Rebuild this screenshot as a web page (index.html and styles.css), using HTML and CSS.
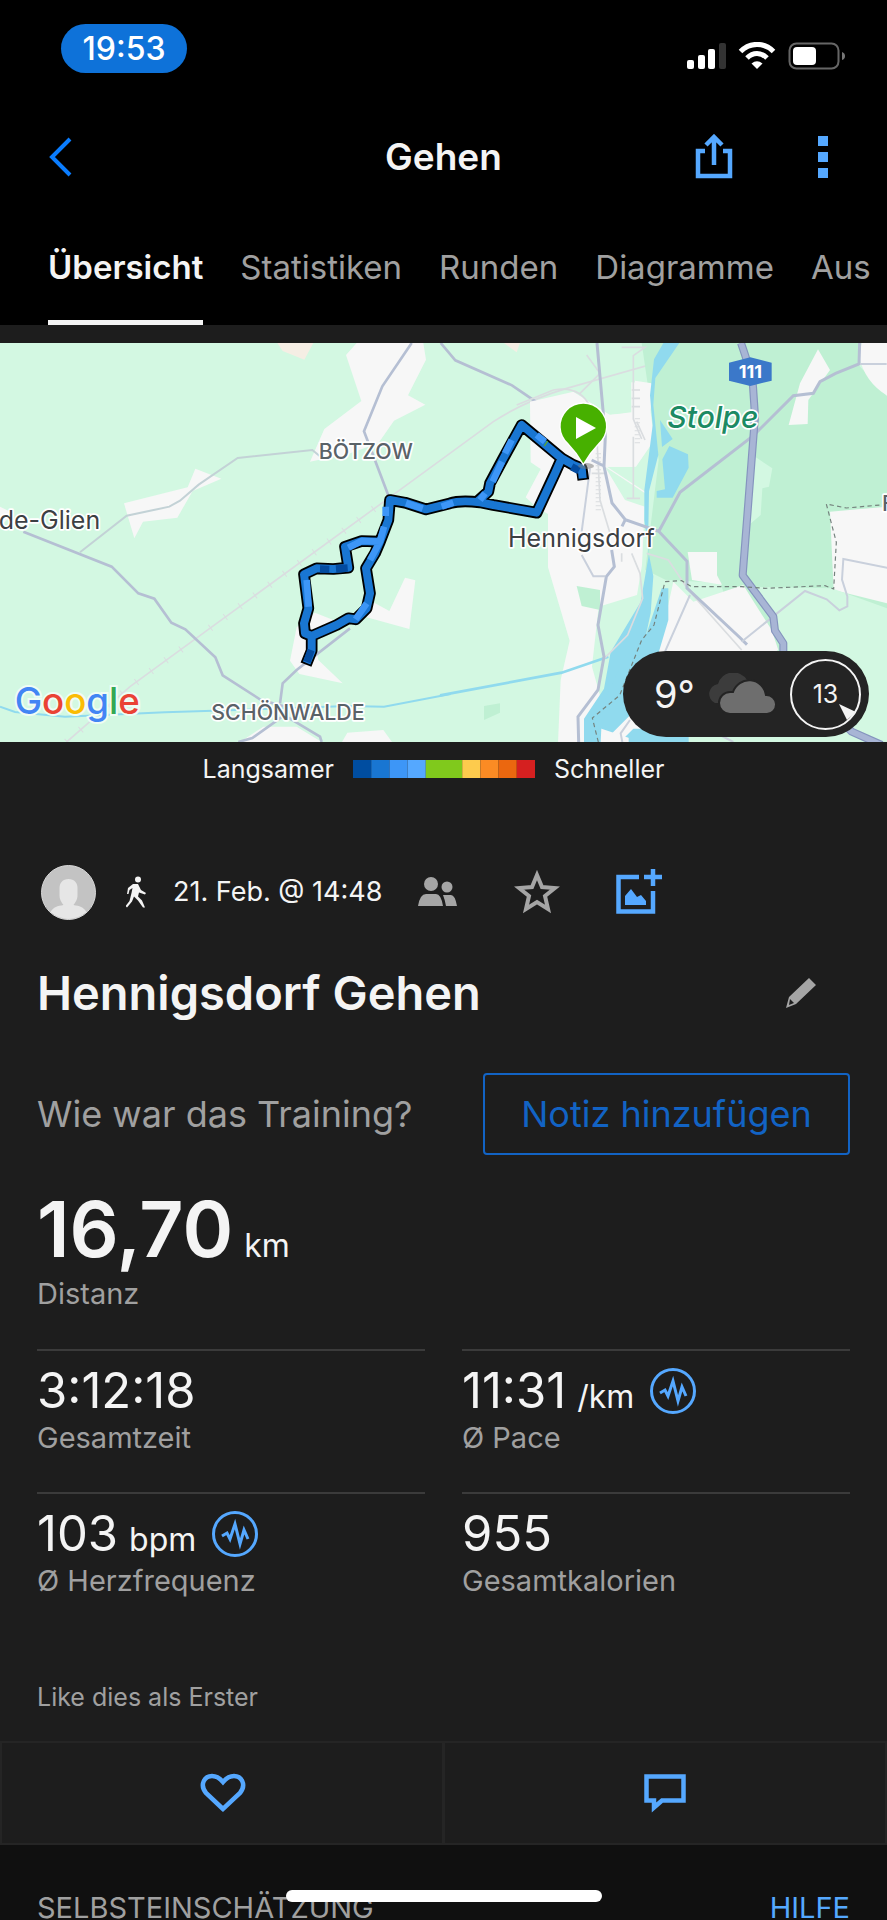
FILE: index.html
```html
<!DOCTYPE html>
<html lang="de">
  <head>
    <meta charset="UTF-8">
    <meta name="viewport" content="width=device-width, initial-scale=1">
    <title>Gehen</title>
    <link rel="stylesheet" href="styles.css">
  </head>
  <body>
    <header>
      <div class="status">
        <span class="clock">19:53</span>
        <svg class="indicators" width="160" height="28" viewBox="0 0 160 28">
          <g fill="#fff">
            <rect x="0" y="18" width="7" height="9" rx="2"/>
            <rect x="11" y="13" width="7" height="14" rx="2"/>
            <rect x="21" y="7" width="7" height="20" rx="2"/>
            <rect x="32" y="1" width="7" height="26" rx="2" fill="#333"/>
          </g>
          <g fill="none" stroke="#fff" stroke-width="5">
            <path d="M53.500 9.500C63 0 77 0 86.500 9.500"/>
            <path d="M60 16C66 10 74 10 80 16"/>
          </g>
          <path d="M64.500 21.500Q70 17 75.500 21.500L70 27z" fill="#fff"/>
          <rect x="102.500" y="1.500" width="49" height="25" rx="7" fill="none" stroke="#666" stroke-width="2"/>
          <rect x="106" y="5" width="23" height="18" rx="4" fill="#fff"/>
          <path d="M155 10q3 1 3 4t-3 4z" fill="#777"/>
        </svg>
      </div>
      <div class="nav">
        <button class="back" aria-label="Zurück">
          <svg width="26" height="42" viewBox="0 0 26 42"><path d="M23 3L5 21l18 18" fill="none" stroke="#0a7dff" stroke-width="4"/></svg>
        </button>
        <h1>Gehen</h1>
        <div class="actions">
          <button aria-label="Teilen">
            <svg width="38" height="46" viewBox="0 0 38 46"><path d="M10 17H3v25h32V17h-7M19 31V3M11 11l8-8 8 8" fill="none" stroke="#55a8ff" stroke-width="4.500"/></svg>
          </button>
          <button aria-label="Mehr">
            <svg width="10" height="42" viewBox="0 0 10 42" fill="#55a8ff"><path d="M0 0h10v10H0zM0 16h10v10H0zM0 32h10v10H0z"/></svg>
          </button>
        </div>
      </div>
      <nav class="tabs">
        <a class="active" href="#uebersicht">Übersicht</a>
        <a href="#statistiken">Statistiken</a>
        <a href="#runden">Runden</a>
        <a href="#diagramme">Diagramme</a>
        <a href="#aus">Aus</a>
      </nav>
    </header>

    <main id="uebersicht">
      <div class="map">
        <svg class="tiles" viewBox="0 9 2661 1197" preserveAspectRatio="xMidYMid slice">
          <rect width="2661" height="1206" fill="#d3f8e2"/>

          <!-- western half -->
          <g fill="#f7f7f7">
            <path d="M1070 9h200l8 50-54 107 52 28-94 48-47 68-85 30-120 25 43-98 111-84-46-138z"/>
            <path d="M372 490l191-48 23-56 78 30-86 37-46 80-103 12-26 50z"/>
            <path d="M1215 713l31 8-18 146-128-35 20-45 48 26zM945 818l55 22-60 40 15 80 73 70-130-28-28-40 20-100z"/>
            <path d="M1042 1178l108-8 26 36h-150zM790 1160h100l75 46H720zM0 500l40 20-40 40z"/>
          </g>
          <path d="M832 9h108l-27 50-65-26zM1512 9h48l-10 28z" fill="#f5eee4"/>
          <g fill="none" stroke="#dadde0" stroke-width="5">
            <path d="M200 1206L390 1040 650 850 1165 475 1480 245Q1580 180 1700 145L2180 9"/>
            <path d="M200 1206L390 1040 650 850 1165 475" stroke-dasharray="3 52" stroke-width="22"/>
          </g>
          <g fill="none" stroke="#b5bfd3" stroke-width="8">
            <path d="M70 575l265 105 80 80 48 16 51 72 42 20 90 84 22 54 115 74 75 20M1235 9l-88 130-55 135 74 195M1050 865l-160 125-42 40-8 60M860 1130l100 60 5 16M715 1206l42-12 90-64"/>
            <path d="M240 637l140-110 128-27 32-18 56-48 117-80 224-24 30 25" stroke="#c3d2d6" stroke-width="6"/>
            <path d="M1322 9l44 52 170 75 70 48 85 100"/>
          </g>
          <path d="M0 1100l45 16 150 14 300-13 240-8 310-11 107 2 200-38" fill="none" stroke="#90daee" stroke-width="6"/>

          <!-- eastern half -->
          <g transform="translate(1320 0)">
            <path d="M605 9h655l-5 65 86 95v1040l-340-20-160-460-165-10-60-30 40-330z" fill="#bff0d3"/>
            <g fill="#f7f7f7">
              <path d="M270 185l130-30 110 70 64-8v-90l62 5-10 160-45 88h-80l115 75-10 220-15 90-115 35-20 180 50 180 0 50H354l8-190 27-118-65-220v-160l-35-20-32-30 45-85-30-20z"/>
              <path d="M585 122l50 8-4 80 12 90-55 80h-88V225l75-5z"/>
              <path d="M1134 28l36 62-65 90-2 72-57 3 34-125zM1265 9h80v160q-70-40-88-120zM743 636h88v70l15 28-90-14z"/>
              <path d="M700 725l60 60 150-50 15 25 70 110 20 60-200 120-180 156h-180l70-110 120-120zM1170 515l171-15v290l-160-40z"/>
            </g>
            <path d="M925 740l250 5 166 60v400H1035V900l-45-75zM930 340l67 45-10 55-20 5-5 80-35 30z" fill="#d3f8e2"/>
            <path d="M410 738l70 12v60l-55-12zM132 1098l48-8v28l-48 22z" fill="#bff0d3"/>
            <path d="M495 380l120 80v40l-60-20zM496 820l94-30-60 115-50 30z" fill="#d3f8e2"/>
            <g fill="#90daee">
              <path d="M718 9l-72 105-6 80 15 150-28 110-3 175 16 80-8 110-30 140-80 80-35 65-5 102H432v-70l60-90 20-110 90-150 25-145-14-100v-90l25-195-8-90 12-108 60-104z"/>
              <path d="M665 745h20v95l-40 135-60 20-15 200-90-30-30 40 30-95 80-170 60-60zM660 240l38 57-32 24zM688 318l56 25 2 40-48 90h-48v-20l25-5-8-90z"/>
            </g>
            <path d="M0 1066l365-68 140-48" fill="none" stroke="#90daee" stroke-width="8"/>
            <path d="M566 1206v-40h180v40z" fill="#90daee"/>
            <path d="M490 1206l90-90v50l-40 40z" fill="#f7f7f7"/>
            <g fill="none" stroke="#dadde0" stroke-width="5">
              <path d="M230 195l110-45q80-15 110 50l20 80 10 200 30 100M440 45l40 55-60 60M545 22h70l-35 25v190l25 60M580 290v185M575 640l25 60 8 75-45 110-70 70M620 640l65 20 60 90 160 180"/>
              <path d="M575 150h25M575 175h25M575 200h25M560 475h40M455 400h45M545 640v25M590 245l25 55" stroke-width="5"/>
              <path d="M475 340v180M592 235v80" stroke-width="16" stroke-dasharray="3 9"/>
            </g>
            <g fill="none" stroke="#b5bfd3" stroke-width="9">
              <path d="M471 9l17 190 8 90-4 90 24 110 40 50 100 35 85 90v80l160 150 20 20M455 360l37 18M556 539l-10 20M515 630l8 50-24 30-25 145 18 95-18 100-60 80 2 76M655 577l65-120 220-170 120-120 60-7 20-35 47-25 70-28 2-63"/>
              <path d="M450 385l-25 190M425 645l35 64h36M750 765l-75 170M905 905l190-152 65 25 38 33 24-12v-30l-16-50 4-62 140 28M1260 72h80M570 1140l-28 40 5 26M840 1185l40 21" stroke="#c9d0dc" stroke-width="6"/>
            </g>
            <g fill="none" stroke-linejoin="round">
              <path d="M903 9q30 85 36 130l6 90-37 477 92 124 5 42 25 38v60l205 205 90 40" stroke="#8594be" stroke-width="24"/>
              <path d="M903 9q30 85 36 130l6 90-37 477 92 124 5 42 25 38v60l205 205 90 40" stroke="#a8b5d5" stroke-width="17"/>
            </g>
            <path d="M475 1206l-18-72 82-68 66-166 37-45 33-130 50-3 30 18h150l70 5 180-8 26 10 8-140-30-115 60 12 112-10" fill="none" stroke="#74827d" stroke-width="3.500" stroke-dasharray="13 10"/>
          </g>

          <!-- track -->
          <g fill="none" stroke-linejoin="round">
            <path d="M918 974l17-42v-44l-20-8-3-30 13-45-7-55-6-47 38-18 50 2 45-4-10-63 50-17 55 2M935 888l75-33 35-20 22 3 33-33 10-45-12-75 27-45 15-35 25-65 5-60 45 8 63 20 72-18Q1380 480 1440 487l40 8 130 23 55-118 20-45-120-100-55 100-40 75-5 25-30 27M1685 355l35 20 25 10 5 35" stroke="#000" stroke-width="35"/>
            <path d="M920 969l15-37v-44l-20-8-3-30 13-45-7-55-6-47 38-18 50 2 45-4-10-63 50-17 55 2M935 888l75-33 35-20 22 3 33-33 10-45-12-75 27-45 15-35 25-65 5-60 45 8 63 20 72-18Q1380 480 1440 487l40 8 130 23 55-118 20-45-120-100-55 100-40 75-5 25-30 27M1685 355l35 20 25 10 3 30" stroke="#1976d2" stroke-width="24"/>
            <path d="M1045 623l40-20 55 2 12-45M1140 605l-30 55M1100 790l-33 48M920 720l6 80M1157 500v28M1218 489l50 17M1325 500l35-12M1478 425l28-60M1515 340l20-40M1610 285l25 20M1440 480l15-20" stroke="#3d96f7" stroke-width="20"/>
            <path d="M960 687l28 1M1008 687l35-3M933 930l-12 36M1715 380l22 12" stroke="#034b9f" stroke-width="22"/>
            <path d="M1633 318l10-15" stroke="#62aa22" stroke-width="4"/>
          </g>

          <!-- start marker -->
          <ellipse cx="1758" cy="378" rx="24" ry="9" fill="#777" opacity=".5"/>
          <path d="M1750 370Q1732 338 1705 310a68 68 0 1 1 90 0Q1768 338 1750 370z" fill="#47b000" stroke="#fff" stroke-width="8" paint-order="stroke"/>
          <path d="M1728 231v66l60-33z" fill="#fff"/>

          <!-- place names -->
          <g class="places">
            <text x="956" y="356" class="district">BÖTZOW</text>
            <text x="634" y="1140" class="district">SCHÖNWALDE</text>
            <text x="-4" y="567" class="town">de-Glien</text>
            <text x="1524" y="622" class="town">Hennigsdorf</text>
            <text x="2646" y="514" class="district">F</text>
            <text x="2002" y="264" class="forest">Stolpe</text>
          </g>
          <path d="M2187 68l64-16 64 16v54l-64 16-64-16z" fill="#3b78c9"/>
          <text x="2251" y="115" class="road">111</text>
          <text x="44" y="1122" class="brand"><tspan fill="#4285f4">G</tspan><tspan fill="#ea4335">o</tspan><tspan fill="#fbbc04">o</tspan><tspan fill="#4285f4">g</tspan><tspan fill="#34a853">l</tspan><tspan fill="#ea4335">e</tspan></text>
        </svg>

        <div class="weather">
          <span class="temp">9°</span>
          <svg width="72" height="42" viewBox="0 0 72 42">
            <path d="M10 30a10 10 0 0 1 3-19 16 16 0 0 1 29-4v23z" fill="#3c3c3c"/>
            <path d="M25 41a11 11 0 0 1 0-22h3a17 17 0 0 1 33 3 9.500 9.500 0 0 1 1 19z" fill="#6e6e6e" stroke="#242424" stroke-width="2"/>
          </svg>
          <div class="wind">
            <span>13</span>
            <svg width="18" height="18" viewBox="0 0 18 18"><path d="M0 0l17 8-9 8z" fill="#f4f4f4"/></svg>
          </div>
        </div>
      </div>

      <div class="legend">
        <span>Langsamer</span>
        <svg width="182" height="18" viewBox="0 0 10 1" preserveAspectRatio="none">
          <path d="M0 0h1v1H0z" fill="#004da0"/><path d="M1 0h1v1H1z" fill="#1976d2"/>
          <path d="M2 0h1v1H2z" fill="#3d96f7"/><path d="M3 0h1v1H3z" fill="#55a8ff"/>
          <path d="M4 0h2v1H4z" fill="#80c91c"/><path d="M6 0h1v1H6z" fill="#fdcb4d"/>
          <path d="M7 0h1v1H7z" fill="#fb8b24"/><path d="M8 0h1v1H8z" fill="#eb670f"/>
          <path d="M9 0h1v1H9z" fill="#d52020"/>
        </svg>
        <span>Schneller</span>
      </div>

      <div class="meta">
        <svg class="avatar" width="55" height="55" viewBox="0 0 55 55">
          <circle cx="27.500" cy="27.500" r="27" fill="#c3c3c3" stroke="#d8d8d8"/>
          <path d="M27.500 14c6 0 9 4 9 9v7c0 5-2 7-4 10 6 1 10 2 13 7a27 27 0 0 1-36 0c3-5 7-6 13-7-2-3-4-5-4-10v-7c0-5 3-9 9-9z" fill="#e6e6e6"/>
        </svg>
        <svg class="walker" width="22" height="32" viewBox="0 0 22 32">
          <circle cx="12" cy="3.500" r="3" fill="#f4f4f4"/>
          <path d="M7 8l5 0 3 6 5 3-1 1.500-6-2-1 4 4 4 3 7-2 0-5-7-4-4-2 5-5 6-1.500-1.500 4-5 2-8 1-5-3 2-1 4-1.500 0 1-6z" fill="#f4f4f4"/>
        </svg>
        <time>21. Feb. @ 14:48</time>
        <svg class="people" width="40" height="30" viewBox="0 0 40 30" fill="#a5a5a5">
          <circle cx="13" cy="7" r="7"/><circle cx="29" cy="10" r="5.500"/>
          <path d="M0 29q2-12 8-12h10q5 0 7 12zM25 18h8q4 0 6 11H28q-1-6-3-11z"/>
        </svg>
        <button class="star" aria-label="Favorit">
          <svg width="46" height="44" viewBox="0 0 46 44"><path d="M23 5l5 12 13 1-10 8 3 13-11-7-11 7 3-13-10-8 13-1z" fill="none" stroke="#a5a5a5" stroke-width="4"/></svg>
        </button>
        <button aria-label="Foto hinzufügen">
          <svg width="46" height="46" viewBox="0 0 46 46">
            <path d="M23 8H2.500v34.500H37V22M28 8h18M37-1v18" fill="none" stroke="#55a8ff" stroke-width="4.500"/>
            <path d="M9 36v-9l6-7 6 8 4-2 5 6v4z" fill="#55a8ff"/>
          </svg>
        </button>
      </div>

      <div class="title">
        <h2>Hennigsdorf Gehen</h2>
        <button aria-label="Namen bearbeiten">
          <svg width="32" height="32" viewBox="0 0 32 32" fill="#a5a5a5"><path fill-rule="evenodd" d="M24 1l7 7-20 19-10 4 3-11zM5 22l-1 6 5-2z"/></svg>
        </button>
      </div>

      <div class="note">
        <span>Wie war das Training?</span>
        <button>Notiz hinzufügen</button>
      </div>

      <dl class="stats">
        <div class="total">
          <dd>16,70 <small>km</small></dd>
          <dt>Distanz</dt>
        </div>
        <div>
          <dd>3:12:18</dd>
          <dt>Gesamtzeit</dt>
        </div>
        <div>
          <dd>11:31 <small>/km</small>
            <svg width="46" height="46" viewBox="0 0 46 46" fill="none" stroke="#55a8ff" stroke-width="3"><circle cx="23" cy="23" r="21.500"/><path d="M10 25l5-3 3 6 5-15 5 20 4-14 4 9"/></svg>
          </dd>
          <dt>Ø Pace</dt>
        </div>
        <div>
          <dd>103 <small>bpm</small>
            <svg width="46" height="46" viewBox="0 0 46 46" fill="none" stroke="#55a8ff" stroke-width="3"><circle cx="23" cy="23" r="21.500"/><path d="M10 25l5-3 3 6 5-15 5 20 4-14 4 9"/></svg>
          </dd>
          <dt>Ø Herzfrequenz</dt>
        </div>
        <div>
          <dd>955</dd>
          <dt>Gesamtkalorien</dt>
        </div>
      </dl>

      <p class="likes">Like dies als Erster</p>

      <div class="social">
        <button aria-label="Gefällt mir">
          <svg width="46" height="40" viewBox="0 0 46 40"><path d="M23 36L6 20C-1 11 5 3 12 3q6 0 11 6 5-6 11-6c7 0 13 8 6 17z" fill="none" stroke="#55a8ff" stroke-width="4.500"/></svg>
        </button>
        <button aria-label="Kommentieren">
          <svg width="42" height="40" viewBox="0 0 42 40"><path d="M2.500 3.500h37v24H18l-8 7v-7H2.500z" fill="none" stroke="#55a8ff" stroke-width="4.500"/></svg>
        </button>
      </div>
    </main>

    <footer>
      <span>SELBSTEINSCHÄTZUNG</span>
      <a href="#hilfe">HILFE</a>
    </footer>
    <div class="home"></div>
  </body>
</html>
```
FILE: styles.css
```css
html { height: 100%; background-color: #101010; }
body { margin: 0; height: 100%; overflow: hidden; position: relative; color: #f4f4f4; background-color: #101010;
       font-family: Inter, "Liberation Sans", sans-serif; font-size: 29px; line-height: 36px; }
* { box-sizing: border-box; }
svg { display: block; flex: none; }
button { padding: 0; border: 0; background: none; color: inherit; font: inherit; display: flex; align-items: center; justify-content: center; }
a { color: inherit; text-decoration: none; }

header { background-color: #000; }

.status { display: flex; justify-content: space-between; align-items: flex-start; padding: 24px 40px 0 61px; }
.clock { width: 126px; height: 49px; border-radius: 25px; background-color: #0e72d9; color: #fff;
         font-size: 32px; font-weight: 500; line-height: 49px; text-align: center; }
.indicators { margin-top: 18px; }

.nav { display: grid; grid-template-columns: 1fr auto 1fr; align-items: center; height: 70px; margin-top: 49px; padding: 0 59px 0 59px; }
.nav h1 { margin: 0; font-size: 37px; font-weight: 600; line-height: 48px; }
.back { justify-self: start; margin-left: -12px; }
.actions { display: flex; justify-content: flex-end; gap: 85px; align-items: center; }

.tabs { display: flex; gap: 37px; margin-top: 27px; padding-left: 48px; height: 106px; overflow: hidden; white-space: nowrap;
        font-size: 33px; line-height: 96px; color: #a0a0a0; }
.tabs .active { color: #f4f4f4; font-weight: 600; border-bottom: 5px solid #f4f4f4; }

main { background-color: #1d1d1d; padding-top: 18px; }

.map { position: relative; height: 399px; }
.tiles { width: 100%; height: 100%; }
.places { fill: #3c4043; stroke: #fff; stroke-width: 10; stroke-linejoin: round; paint-order: stroke; }
.district { font-size: 64px; font-weight: 500; fill: #5a6268; }
.town { font-size: 75px; }
.forest { font-size: 90px; font-weight: 500; font-style: italic; fill: #1c8a63; }
.road { font-size: 54px; font-weight: 700; fill: #fff; text-anchor: middle; }
.brand { font-size: 110px; font-weight: 500; stroke: #effcf4; stroke-width: 12; paint-order: stroke; }

.weather { position: absolute; right: 18px; bottom: 5px; display: flex; align-items: center; width: 246px; height: 86px;
           padding: 0 8px 0 31px; border-radius: 43px; background-color: #242424; }
.temp { flex: 1; font-size: 38px; }
.wind { position: relative; width: 71px; height: 71px; margin-left: 13px; border: 2px solid #f4f4f4; border-radius: 50%;
        font-size: 25px; line-height: 67px; text-align: center; }
.wind svg { position: absolute; right: 2px; bottom: 6px; }

.legend { display: flex; justify-content: center; align-items: center; gap: 19px; height: 54px; padding-right: 20px; font-size: 25px; }

.meta { display: flex; align-items: center; height: 56px; margin-top: 68px; padding-left: 41px; font-size: 27px; }
.walker { margin: 0 25px 0 30px; }
.people { margin-left: 36px; }
.star { margin: 0 56px; }

.title { display: flex; justify-content: space-between; align-items: center; height: 60px; margin-top: 43px; padding: 0 70px 0 37px; }
.title h2 { margin: 0; font-size: 47px; font-weight: 600; line-height: 60px; }

.note { display: flex; justify-content: space-between; align-items: center; margin-top: 50px; padding: 0 37px; font-size: 36px; color: #a0a0a0; }
.note button { width: 367px; height: 82px; border: 2px solid #1263c4; border-radius: 4px; color: #1263c4; }

.stats { display: grid; grid-template-columns: 1fr 1fr; column-gap: 37px; margin: 0; padding: 0 37px; color: #a0a0a0; }
.stats div { height: 143px; padding-top: 16px; border-top: 2px solid #3b3b3b; }
.stats dd { display: flex; align-items: baseline; gap: 11px; margin: 0; font-size: 49px; line-height: 48px; height: 48px; color: #f4f4f4; }
.stats dd svg { align-self: center; margin-left: 5px; }
.stats small { font-size: 32px; }
.stats dt { margin-top: 5px; }
.stats .total { grid-column: 1 / 3; height: 194px; padding-top: 32px; border: 0; }
.stats .total dd { height: 84px; font-size: 77px; font-weight: 600; line-height: 84px; }
.stats .total small { font-weight: 400; }

.likes { margin: 0; padding: 44px 37px 26px; font-size: 25px; color: #a0a0a0; }

.social { display: grid; grid-template-columns: 1fr 1fr; border: 2px solid #252525; }
.social button { height: 100px; }
.social button + button { margin-left: -2px; border-left: 3px solid #252525; }

footer { display: flex; justify-content: space-between; padding: 45px 37px 0 37px; color: #a0a0a0; }
footer a { color: #55a8ff; }

.home { position: absolute; left: 0; right: 0; bottom: 18px; width: 316px; height: 12px; margin: 0 auto; border-radius: 6px; background-color: #fff; }
```
